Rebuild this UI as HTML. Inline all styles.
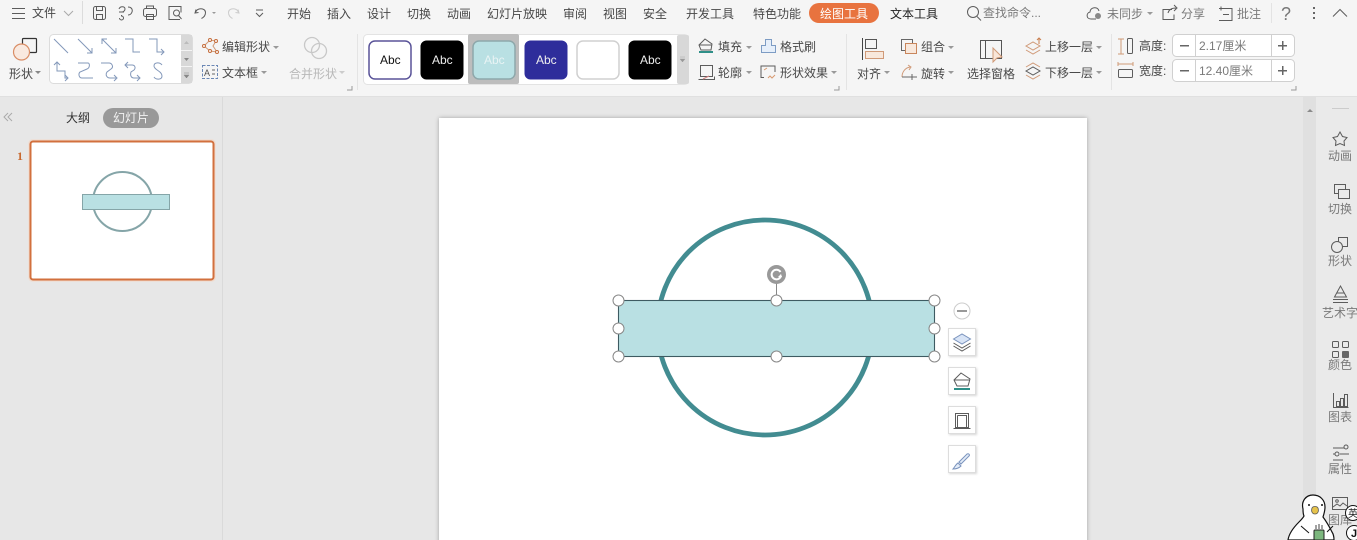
<!DOCTYPE html>
<html lang="zh"><head><meta charset="utf-8"><title>绘图工具</title>
<style>
html,body{margin:0;padding:0;width:1357px;height:540px;overflow:hidden;background:#e7e7e7}
svg{display:block;position:absolute;left:0;top:0}
text{font-family:"Liberation Sans","Noto Sans CJK SC",sans-serif;font-size:12px;fill:#484848}
.d{fill:#7a7a7a}
.a{font-family:"Liberation Sans",sans-serif;font-size:12px}
.i{fill:none;stroke:#5c5c5c;stroke-width:1}
.o{fill:none;stroke:#d09a78;stroke-width:1}
.b{fill:none;stroke:#8398ba;stroke-width:1}
</style></head><body>
<svg width="1357" height="540" viewBox="0 0 1357 540" xmlns="http://www.w3.org/2000/svg">
<defs>
<filter id="s" x="-5%" y="-5%" width="110%" height="110%"><feDropShadow dx="0" dy="0" stdDeviation="2" flood-color="#000" flood-opacity=".3"/></filter>
<filter id="s2" x="-20%" y="-20%" width="140%" height="140%"><feDropShadow dx="1" dy="1" stdDeviation="1" flood-color="#000" flood-opacity=".16"/></filter>
</defs>
<!-- backgrounds -->
<rect width="1357" height="540" fill="#e7e7e7"/>
<rect x="0" y="0" width="1357" height="96" fill="#f5f5f5"/>
<rect x="0" y="96" width="1357" height="1" fill="#e0e0e0"/>
<rect x="222" y="97" width="1" height="443" fill="#dadada"/>
<rect x="1303" y="97" width="13" height="443" fill="#e0e0e0"/>
<rect x="1316" y="97" width="41" height="443" fill="#eaeaea"/>
<path d="M1307 112h6l-3-3z" fill="#8a8a8a"/>
<!-- title row -->
<path class="i" d="M12 8.500h13M12 13.500h13M12 18.500h13"/>
<text x="32" y="17">文件</text>
<path d="M64 11l4.500 4.500 4.500-4.500" fill="none" stroke="#aaa"/>
<rect x="82" y="1" width="1" height="23" fill="#dcdcdc"/>
<g class="i"><rect x="93.500" y="6.500" width="12" height="13" rx="2"/><path d="M96.500 6.500v4h6v-4M96.500 19.500v-5h6v5"/></g>
<path class="i" d="M119 9c1-3 6-3 6 0 0 2-2 3-3 3M119 12h5M121.500 15v1a2 2 0 1 1-2 2M128 7c3 0 5 2 4 5s-3 3-4 3"/>
<g class="i"><rect x="143.500" y="8.500" width="13" height="8" rx="2"/><path d="M146.500 8.500v-2.500h7v2.500M146.500 14.500h7v5h-7z"/></g>
<g class="i"><path d="M180 19.500h-11v-13h12v6"/><circle cx="176.500" cy="13" r="3"/><path d="M178.500 15.500l3 3.500"/></g>
<path class="i" d="M196 9.500l-1 3.500 3.500-.5M195.500 12.500c1-5 10-5 10 0 0 3-2 5-4 6"/><path d="M212 12l2 2 2-2z" fill="#999"/>
<path d="M238 9.500l1 3.500-3.500-.5M238.500 12.500c-1-5-10-5-10 0 0 3 2 5 4 6" fill="none" stroke="#ccc"/>
<path class="i" d="M256 10h7M256 13l3.500 3.500 3.500-3.500"/>
<g>
<text x="287" y="18">开始</text><text x="327" y="18">插入</text><text x="367" y="18">设计</text><text x="407" y="18">切换</text><text x="447" y="18">动画</text><text x="487" y="18">幻灯片放映</text><text x="563" y="18">审阅</text><text x="603" y="18">视图</text><text x="643" y="18">安全</text><text x="686" y="18">开发工具</text><text x="753" y="18">特色功能</text>
</g>
<rect x="809" y="3" width="70" height="20" rx="10" fill="#e8733f"/>
<text x="820" y="18" style="fill:#fff">绘图工具</text>
<text x="890" y="18" style="fill:#222">文本工具</text>
<g class="i"><circle cx="973" cy="12" r="5.500"/><path d="M977 16.500l4 4"/></g>
<text x="983" y="17" class="d">查找命令...</text>
<path class="i" d="M1096 19h-5c-5 0-5-6-1-7 0-5 8-6 9-1"/><circle cx="1098" cy="16" r="3" fill="#888"/>
<text x="1107" y="18" class="d">未同步</text><path d="M1147 12h6l-3 3z" fill="#999"/>
<path class="i" d="M1172 9.500h-9v10h11v-5M1168 13c1-4 4-5 8-5M1174 5l3 3-3 3"/>
<text x="1181" y="18" class="d">分享</text>
<path class="i" d="M1221 8.500h11v12h-11M1223 14.500h6M1219 8.500h4M1221 6.500v4M1219 20.500h4"/>
<text x="1237" y="18" class="d">批注</text>
<rect x="1271" y="3" width="1" height="20" fill="#e3e3e3"/>
<text x="1281" y="20" style="font-size:18px;fill:#777">?</text>
<g fill="#666"><rect x="1313" y="7" width="2" height="2"/><rect x="1313" y="12" width="2" height="2"/><rect x="1313" y="17" width="2" height="2"/></g>
<path class="i" d="M1333 16.500l7-7 7 7"/>
<!-- shape group -->
<rect x="22.500" y="38.500" width="14" height="14" fill="none" stroke="#333" stroke-width="1.200" rx="1"/>
<circle cx="21.500" cy="52" r="8" fill="#f9e9df" stroke="#d98d65" stroke-width="1.200"/>
<text x="9" y="78">形状</text><path d="M35 71h6l-3 3z" fill="#888"/>
<rect x="49.500" y="34.500" width="143" height="49" rx="4" fill="#fff" stroke="#dcdcdc"/>
<rect x="181" y="35" width="11" height="48" fill="#d8d8d8"/>
<path d="M181 50.500h11M181 66.500h11" stroke="#f4f4f4"/>
<path d="M184 44h5l-2.500-3z" fill="#bbb"/><path d="M184 58h5l-2.500 3z" fill="#888"/><path d="M184 73h5M184 75h5l-2.500 3z" fill="#888" stroke="#888" stroke-width=".5"/>
<g class="b">
<path d="M54 39l14 14"/>
<path d="M78 39l14 14M92 48v5h-5"/>
<path d="M102 39l14 14M102 44v-5h5M116 48v5h-5"/>
<path d="M125 39h8v13h7"/>
<path d="M149 39h8v13h7M161 49l3 3-3 3"/>
<path d="M54 65l3-3 3 3M57 62v9h8v7h3M65 75l3 3-3 3"/>
<path d="M78 63h10c2 0 2 5-1 6l-7 3c-2 2-1 6 2 6h11"/>
<path d="M101 63h8c3 0 5 4 2 6l-4 3c-2 3 0 6 3 6h6M114 75l3 3-3 3"/>
<path d="M128 62l-3 3 3 3M125 65h7c3 0 4 3 2 5l-3 2c-1 3 0 6 3 6h6M137 75l3 3-3 3"/>
<path d="M162 65c-2-3-8-3-8 1 0 4 8 5 8 10 0 4-6 4-8 1"/>
</g>
<!-- edit shape -->
<path class="o" d="M204 46l6-6 6 1-3 5 4 6-7-1z" stroke-width="1.200"/>
<g fill="#fff" stroke="#c46d3c"><circle cx="204" cy="46" r="1.500"/><circle cx="210" cy="40" r="1.500"/><circle cx="216" cy="41" r="1.500"/><circle cx="217" cy="52" r="1.500"/><circle cx="210" cy="51" r="1.500"/></g>
<text x="222" y="51">编辑形状</text><path d="M273 46h6l-3 3z" fill="#999"/>
<rect x="202.500" y="65.500" width="15" height="13" fill="none" stroke="#6a87b5" stroke-dasharray="3 1.500"/>
<text x="204" y="76" style="font-size:9px;fill:#555">A</text>
<path d="M212 70h3M212 74h3" stroke="#666"/>
<text x="222" y="77">文本框</text><path d="M261 71h6l-3 3z" fill="#999"/>
<g fill="none" stroke="#c8c8c8" stroke-width="1.300"><circle cx="312" cy="45" r="7.500"/><circle cx="319" cy="51" r="7.500"/></g>
<text x="289" y="78" style="fill:#b8b8b8">合并形状</text><path d="M339 71h6l-3 3z" fill="#ccc"/>
<path d="M347 90h5v-4" fill="none" stroke="#999"/>
<rect x="357" y="34" width="1" height="56" fill="#e4e4e4"/>
<!-- style gallery -->
<rect x="363.500" y="34.500" width="325" height="50" rx="4" fill="#fff" stroke="#e3e3e3"/>
<rect x="677" y="35" width="12" height="49" rx="2" fill="#d8d8d8"/>
<path d="M680 57h5M680 59h5l-2.500 3z" fill="#999" stroke="#999" stroke-width=".4"/>
<rect x="468" y="34" width="51" height="50" rx="2" fill="#bdbdbd"/>
<rect x="369" y="41" width="42" height="38" rx="6" fill="#fff" stroke="#5a5499" stroke-width="1.500"/>
<rect x="420.500" y="40.500" width="43" height="39" rx="6" fill="#000"/>
<rect x="473" y="41" width="42" height="38" rx="6" fill="#b9e0e3" stroke="#8ea8ab" stroke-width="1.500"/>
<rect x="524.500" y="40.500" width="43" height="39" rx="6" fill="#2e2d9b"/>
<rect x="577" y="41" width="42" height="38" rx="6" fill="#fff" stroke="#d0d0d0" stroke-width="1.500"/>
<rect x="628.500" y="40.500" width="43" height="39" rx="6" fill="#000"/>
<text x="380" y="64" class="a" style="fill:#111">Abc</text>
<text x="432" y="64" class="a" style="fill:#eee">Abc</text>
<text x="484" y="64" class="a" style="fill:#e8f3f4">Abc</text>
<text x="536" y="64" class="a" style="fill:#eee">Abc</text>
<text x="640" y="64" class="a" style="fill:#eee">Abc</text>
<!-- fill outline -->
<path class="i" d="M699 45l6-6 7 5-1 6h-10zM699 45h13"/>
<rect x="699" y="51" width="14" height="2" fill="#2f8f88"/>
<text x="718" y="51">填充</text><path d="M746 46h6l-3 3z" fill="#999"/>
<path d="M761.500 45.500h4v-6h6v6h4v7h-14z" fill="#e6effa" stroke="#7d9cc4"/>
<text x="780" y="51">格式刷</text>
<g class="i"><rect x="700.500" y="65.500" width="12" height="11"/><path d="M698.500 79.500h16v-3"/></g><path d="M703 79l6-3" stroke="#d08080"/>
<text x="718" y="77">轮廓</text><path d="M746 71h6l-3 3z" fill="#999"/>
<path class="i" d="M764 77.500h-3v-11.500h14v6"/><path d="M764 70l3-2M768 78l2-2 2 2 3-3" stroke="#d89a70" fill="none"/>
<text x="780" y="77">形状效果</text><path d="M831 71h6l-3 3z" fill="#999"/>
<path d="M834 90h5v-4" fill="none" stroke="#999"/>
<rect x="846" y="34" width="1" height="56" fill="#e4e4e4"/>
<!-- align -->
<path d="M862.500 38v22" stroke="#444"/>
<rect x="865.500" y="39.500" width="11" height="9" fill="none" stroke="#555"/>
<rect x="865.500" y="51.500" width="18" height="7" fill="#f8e8dc" stroke="#d09a78"/>
<text x="857" y="78">对齐</text><path d="M884 71h6l-3 3z" fill="#999"/>
<rect x="901.500" y="39.500" width="11" height="11" fill="none" stroke="#666"/>
<rect x="905.500" y="43.500" width="11" height="10" fill="#f8e8dc" stroke="#c9865c"/>
<text x="921" y="51">组合</text><path d="M948 46h6l-3 3z" fill="#999"/>
<path d="M902 77c0-5 3-9 8-10M908 65l3 2-2 3" class="o"/><path d="M902 77h15M912 74v6" stroke="#666"/>
<text x="921" y="78">旋转</text><path d="M948 71h6l-3 3z" fill="#999"/>
<rect x="980.500" y="40.500" width="21" height="18" fill="none" stroke="#555"/><path d="M985.500 41v17" stroke="#555"/>
<path d="M993 48l9 9-5 1-4 4z" fill="#f9e6d8" stroke="#d09a78"/>
<text x="967" y="78">选择窗格</text>
<!-- layers -->
<path class="o" d="M1026 46l7-4 7 4-7 4zM1026 50l7 4 7-4" stroke-width="1.200"/><path d="M1039 38v6M1037 40l2-2 2 2" stroke="#c97f50" fill="none"/>
<text x="1045" y="51">上移一层</text><path d="M1096 46h6l-3 3z" fill="#999"/>
<path class="i" d="M1026 71l7-4 7 4-7 4z"/><path class="o" d="M1026 67l7-4 7 4M1026 75l7 4 7-4"/>
<text x="1045" y="77">下移一层</text><path d="M1096 71h6l-3 3z" fill="#999"/>
<rect x="1111" y="34" width="1" height="56" fill="#e4e4e4"/>
<!-- size -->
<path class="o" d="M1121 39v15M1118 39h6M1118 54h6"/><rect x="1127.500" y="38.500" width="5" height="15" rx="1" class="i"/>
<text x="1139" y="50">高度:</text>
<path class="o" d="M1118 64h15M1118 62v4M1133 62v4"/><rect x="1118.500" y="69.500" width="14" height="8" rx="1" class="i"/>
<text x="1139" y="75">宽度:</text>
<g fill="#fff" stroke="#d0d0d0">
<rect x="1172.500" y="34.500" width="122" height="22" rx="4"/>
<rect x="1172.500" y="59.500" width="122" height="22" rx="4"/>
<path d="M1195.500 35v21M1271.500 35v21M1195.500 60v21M1271.500 60v21"/>
</g>
<g fill="#666"><rect x="1180" y="45" width="9" height="1.500"/><rect x="1180" y="70" width="9" height="1.500"/><rect x="1278" y="45" width="9" height="1.500"/><rect x="1282" y="41" width="1.500" height="9"/><rect x="1278" y="70" width="9" height="1.500"/><rect x="1282" y="66" width="1.500" height="9"/></g>
<text x="1199" y="50" class="d">2.17厘米</text>
<text x="1199" y="75" class="d">12.40厘米</text>
<path d="M1291 90h5v-4" fill="none" stroke="#999"/>
<!-- left panel -->
<path d="M8 113l-4 4 4 4M12 113l-4 4 4 4" fill="none" stroke="#aaa"/>
<text x="66" y="122" style="fill:#333">大纲</text>
<rect x="103" y="108" width="56" height="20" rx="10" fill="#999"/>
<text x="113" y="122" style="fill:#f4f4f4">幻灯片</text>
<text x="17" y="160" style="font-family:'Liberation Serif',serif;font-weight:bold;font-size:12px;fill:#c8692f">1</text>
<rect x="29" y="140" width="186" height="141" rx="3" fill="none" stroke="#f3d9c8" stroke-width="1"/>
<rect x="30.500" y="141.500" width="183" height="138" rx="2.500" fill="#fff" stroke="#d2703e" stroke-width="2"/>
<circle cx="122.500" cy="201.500" r="29.500" fill="#fff" stroke="#85a5a8" stroke-width="2"/>
<rect x="82.500" y="194.500" width="87" height="15" fill="#b9e0e3" stroke="#85a5a8"/>
<!-- slide -->
<rect x="439" y="118" width="648" height="430" fill="#fff" filter="url(#s)"/>
<circle cx="765" cy="327.500" r="107.500" fill="none" stroke="#428c91" stroke-width="4.800"/>
<rect x="618.500" y="300.500" width="316" height="56" fill="#b9e0e3" stroke="#3e5b62" stroke-width="1.100"/>
<path d="M776.500 300v-18" stroke="#888"/>
<circle cx="776.500" cy="274.500" r="9.500" fill="#999"/>
<path d="M781 276a4.800 4.800 0 1 1-.5-4" fill="none" stroke="#fff" stroke-width="2"/>
<path d="M782 277l-4 0 3-3z" fill="#fff"/>
<g fill="#fff" stroke="#888">
<circle cx="618.500" cy="300.500" r="5.500"/><circle cx="776.500" cy="300.500" r="5.500"/><circle cx="934.500" cy="300.500" r="5.500"/>
<circle cx="618.500" cy="328.500" r="5.500"/><circle cx="934.500" cy="328.500" r="5.500"/>
<circle cx="618.500" cy="356.500" r="5.500"/><circle cx="776.500" cy="356.500" r="5.500"/><circle cx="934.500" cy="356.500" r="5.500"/>
</g>
<!-- floating toolbar -->
<circle cx="962" cy="311" r="8" fill="#fff" stroke="#ccc"/><rect x="957" y="310" width="10" height="2" fill="#999"/>
<g fill="#fff" stroke="#ddd" filter="url(#s2)">
<rect x="948.500" y="328.500" width="27" height="27"/><rect x="948.500" y="367.500" width="27" height="27"/><rect x="948.500" y="406.500" width="27" height="27"/><rect x="948.500" y="445.500" width="27" height="27"/>
</g>
<path d="M953.500 339l8.500-5 8.500 5-8.500 5z" fill="#d8e4f6" stroke="#7a93bd"/>
<path class="i" d="M953.500 343l8.500 5 8.500-5M953.500 346l8.500 5 8.500-5"/>
<path class="i" d="M954 380l7-7 9 6-2 7h-11zM954 380h16"/>
<rect x="954" y="388" width="16" height="2" fill="#2f8f88"/>
<g class="i"><rect x="955.500" y="413.500" width="13" height="14"/><path d="M957.500 415.500h9v12M957.500 415.500v12M953.500 428.500h17"/></g>
<path d="M953 469c1-1 3-5 5-6l3 3c-2 2-5 3-8 3zM959 462l8-8c2-1 3 1 2 2l-8 8z" fill="#e3ecf8" stroke="#7a93bd"/>
<!-- right panel -->
<path d="M1332 108.500h17" stroke="#ccc"/>
<path class="i" d="M1340 132l2.500 4.500 4.500 1-3 3.500.5 4.500-4.500-2-4.500 2 .5-4.500-3-3.500 4.500-1z"/>
<text x="1328" y="160" class="d">动画</text>
<g class="i"><rect x="1334.500" y="184.500" width="11" height="9"/><rect x="1338.500" y="189.500" width="11" height="9" fill="#eaeaea"/></g>
<text x="1328" y="213" class="d">切换</text>
<g class="i"><rect x="1338.500" y="237.500" width="9" height="9"/><circle cx="1337" cy="247" r="5.500" fill="#eaeaea"/></g>
<text x="1328" y="265" class="d">形状</text>
<path class="i" d="M1340.500 286l-6 11h12zM1337 293h7M1333 299.500h15M1333 302.500h15"/>
<text x="1322" y="317" class="d">艺术字</text>
<g class="i"><rect x="1332.500" y="341.500" width="6" height="6" rx="1"/><rect x="1342.500" y="341.500" width="6" height="6" rx="1"/><rect x="1332.500" y="351.500" width="6" height="6" rx="1"/></g>
<rect x="1342" y="351" width="7" height="7" rx="1" fill="#666"/>
<text x="1328" y="369" class="d">颜色</text>
<g class="i"><path d="M1333.500 393v14.500h15"/><rect x="1336.500" y="401.500" width="3" height="5"/><rect x="1340.500" y="398.500" width="3" height="8"/><rect x="1344.500" y="394.500" width="3" height="12"/></g>
<text x="1328" y="421" class="d">图表</text>
<g class="i"><path d="M1333 448h11M1333 454h2M1340 454h9M1333 460h10"/><circle cx="1346" cy="447" r="2"/><circle cx="1337" cy="454" r="2"/></g>
<text x="1328" y="473" class="d">属性</text>
<g class="i"><rect x="1332.500" y="497.500" width="15" height="12"/><circle cx="1337" cy="501" r="1.300"/><path d="M1333 507l4-3 3 2 3-3 4 3"/></g>
<text x="1328" y="524" class="d">图库</text>
<!-- duck -->
<path d="M1303 509c-2-8 3-14 10-14 7 0 12 5 12 12 0 4-1 7-2 10 3 4 6 9 9 15 2 3 2 6 2 8h-46c1-7 6-13 11-18 2-2 4-4 5-6-1-2-1-5-1-7z" fill="#fff" stroke="#111" stroke-width="1.200"/>
<circle cx="1309" cy="505" r="1" fill="#111"/><circle cx="1322" cy="505" r="1" fill="#111"/>
<path d="M1312 508c1-2 5-2 6 0 1 3 0 6-3 6s-4-3-3-6z" fill="#e6c34c" stroke="#555" stroke-width=".8"/>
<rect x="1314" y="530" width="10" height="10" rx="1" fill="#7cb77e" stroke="#222"/>
<path d="M1316 529v-4M1319 529v-5M1322 529v-4" stroke="#444"/>
<path d="M1301 526l8 7M1333 526l-6 6" stroke="#111" fill="none"/>
<circle cx="1353" cy="513" r="7.500" fill="#fff" stroke="#111"/>
<text x="1348" y="517" style="font-size:10px;fill:#222">英</text>
<circle cx="1354" cy="533" r="7.500" fill="#fff" stroke="#111"/>
<text x="1351" y="537" style="font-size:11px;fill:#111;font-weight:bold">J</text>
</svg>
</body></html>
